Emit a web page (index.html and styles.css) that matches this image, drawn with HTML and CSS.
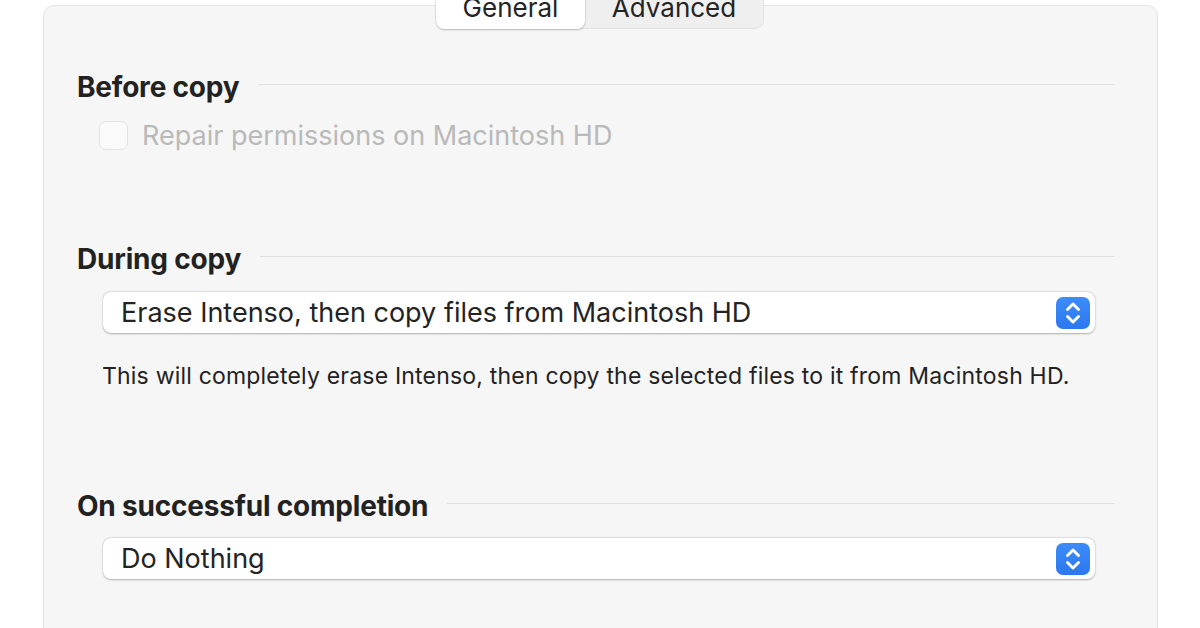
FILE: index.html
```html
<!DOCTYPE html>
<html>
<head lang="en">
    <meta charset="UTF-8">
    <title>Copy options</title>
    <link rel="stylesheet" href="styles.css">
</head>
<body>

<div class="panel">
    <div class="tabs">
        <span class="tab on">General</span>
        <span class="tab">Advanced</span>
    </div>

    <div class="sec sec-before">
        <div class="head"><h2>Before copy</h2><i></i></div>
        <label class="check">
            <em></em><span>Repair permissions on Macintosh HD</span>
        </label>
    </div>

    <div class="sec sec-during">
        <div class="head"><h2>During copy</h2><i></i></div>
        <div class="popup">
            <span>Erase Intenso, then copy files from Macintosh HD</span>
            <b class="step">
                <svg width="34" height="32" viewBox="0 0 34 32"><path d="M11.5 12.5 17 7 22.5 12.5M11.5 19.5 17 25 22.5 19.5" fill="none" stroke="#fff" stroke-width="2.9" stroke-linecap="round" stroke-linejoin="round"/></svg>
            </b>
        </div>
        <p class="note">This will completely erase Intenso, then copy the selected files to it from Macintosh HD.</p>
    </div>

    <div class="sec sec-done">
        <div class="head"><h2>On successful completion</h2><i></i></div>
        <div class="popup">
            <span>Do Nothing</span>
            <b class="step">
                <svg width="34" height="32" viewBox="0 0 34 32"><path d="M11.5 12.5 17 7 22.5 12.5M11.5 19.5 17 25 22.5 19.5" fill="none" stroke="#fff" stroke-width="2.9" stroke-linecap="round" stroke-linejoin="round"/></svg>
            </b>
        </div>
    </div>
</div>

</body>
</html>
```

FILE: styles.css
```css
*{
    padding: 0;
    margin: 0;
    box-sizing: border-box;
}
html,body{
    height: 100%;
    overflow: hidden;
}
body{
    background: #fff;
    font-family: Inter, "Liberation Sans", sans-serif;
    color: #232323;
}
.panel{
    margin: 5px 0 0 43px;
    width: 1115px;
    height: 700px;
    background: #f6f6f6;
    border: 1px solid #e4e4e4;
    border-radius: 11px;
    padding: 0 42px 0 33px;
}
.tabs{
    display: flex;
    width: 328px;
    height: 45px;
    margin: -22px auto 0;
    background: #efefef;
    border: 1px solid #e2e2e2;
    border-radius: 9px;
    position: relative;
    left: 4px;
}
.tab{
    display: flex;
    align-items: center;
    justify-content: center;
    font-size: 26px;
    line-height: 30px;
    padding-top: 3px;
    color: #242424;
}
.tab:first-child{ width: 149px; }
.tab:last-child{ flex: 1; }
.tab.on{
    background: #fff;
    border-radius: 8px;
    margin: -1px 0 -1px -1px;
    box-shadow: 0 1px 2px rgba(0,0,0,.22), 0 0 0 .5px rgba(0,0,0,.08);
}
.head{
    display: flex;
    align-items: center;
    height: 30px;
}
.head h2{
    font-size: 28px;
    font-weight: 700;
    letter-spacing: -.2px;
    color: #222;
}
.head i{
    flex: 1;
    height: 1px;
    background: #e0e0e0;
    margin: -5px 0 0 19px;
}
.sec-before{ padding-top: 43px; }
.sec-during{ padding-top: 94px; }
.sec-done{ padding-top: 102px; }
.check{
    display: flex;
    align-items: center;
    margin: 18px 0 0 22px;
    height: 30px;
}
.check em{
    width: 29px;
    height: 29px;
    border: 1px solid #e3e3e3;
    border-radius: 7px;
    background: #fafafa;
}
.check span{
    margin-left: 14px;
    font-size: 27px;
    color: #b9b9b9;
}
.popup{
    display: flex;
    align-items: center;
    justify-content: space-between;
    margin: 18px 20px 0 26px;
    height: 41px;
    background: #fff;
    border-radius: 8px;
    box-shadow: 0 .5px 2px rgba(0,0,0,.28), 0 0 0 .5px rgba(0,0,0,.06);
    padding: 0 5px 0 18px;
}
.popup span{
    font-size: 27px;
    color: #232323;
}
.step{
    display: block;
    width: 34px;
    height: 32px;
    border-radius: 7px;
    background: linear-gradient(#3d8cf8, #2c78f1);
}
.step svg{ display: block; }
.note{
    margin: 30px 0 0 25px;
    font-size: 23px;
    line-height: 26px;
    letter-spacing: .2px;
    color: #222;
}
.sec-done .popup{ margin-top: 17px; }
```
